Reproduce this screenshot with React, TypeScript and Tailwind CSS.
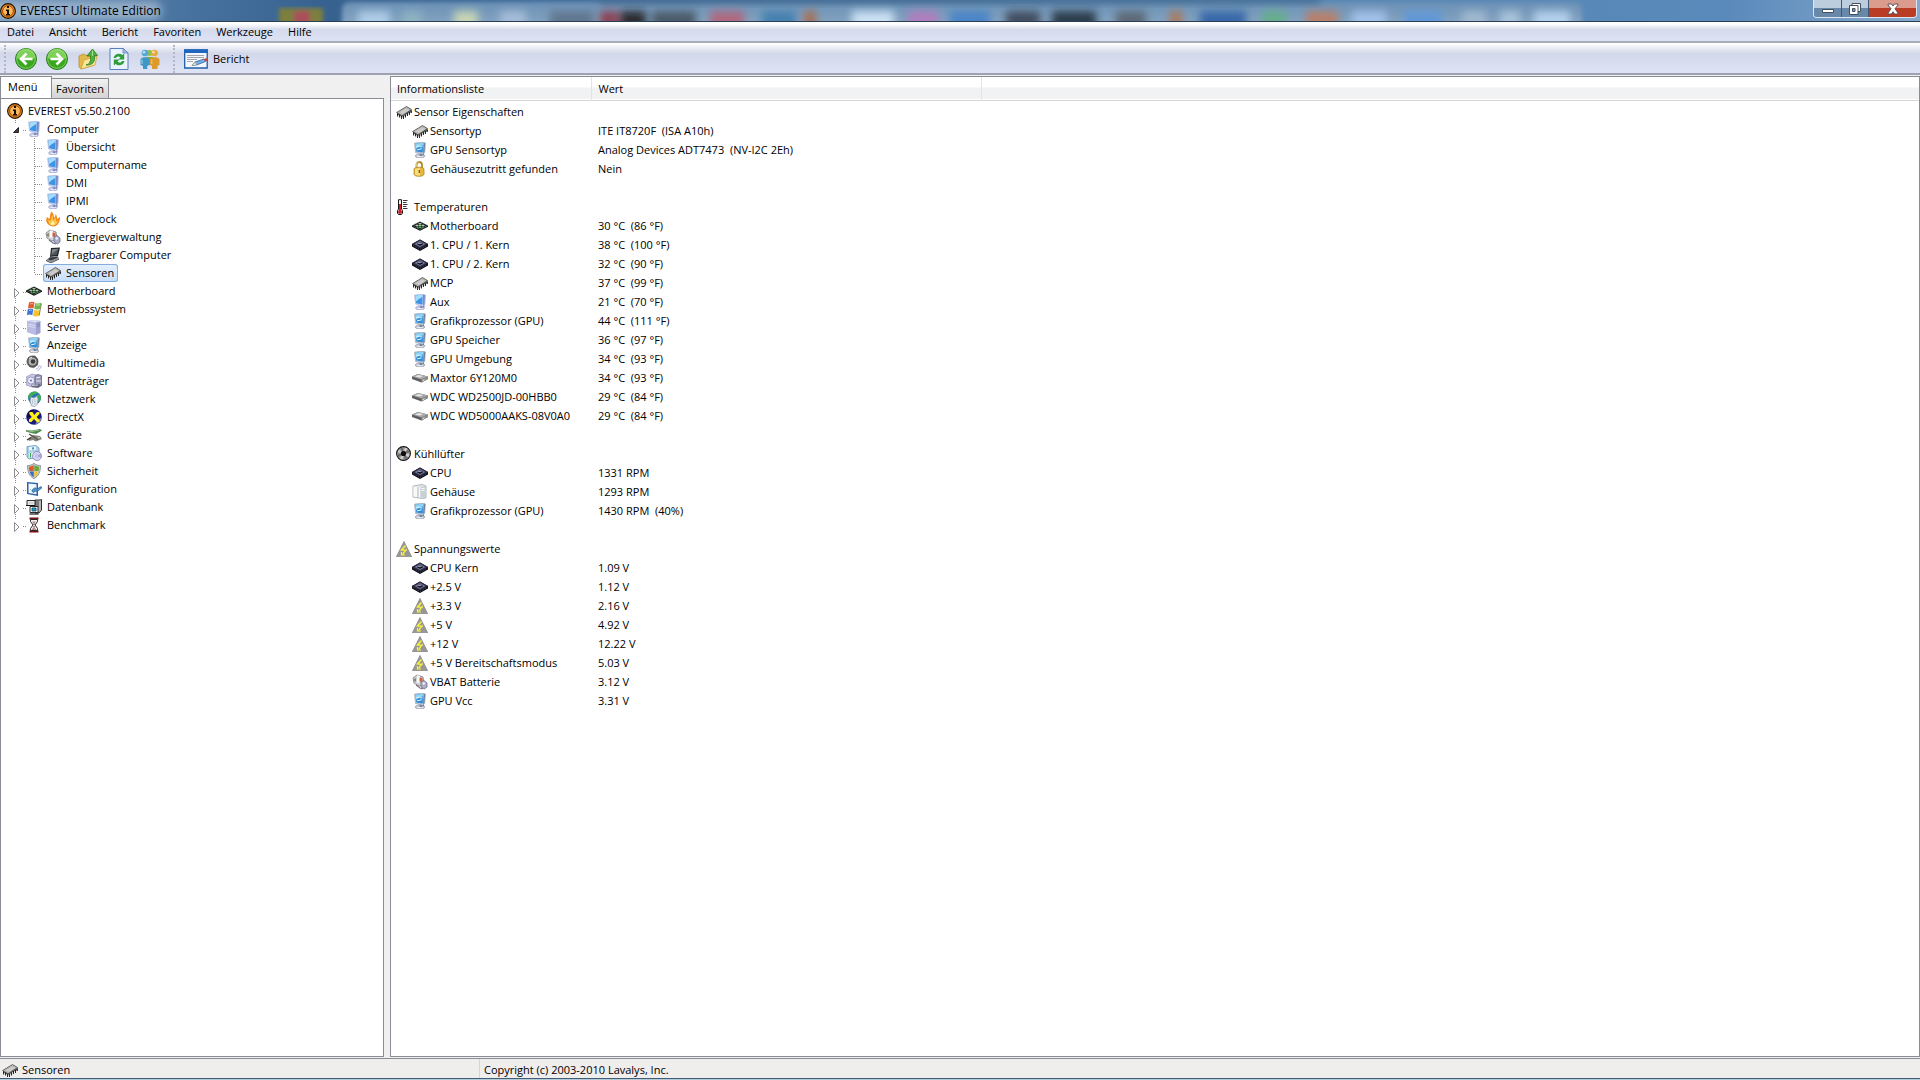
import clsx from 'clsx';
import { useState, type ReactNode } from 'react';

const MENUS = ['Datei', 'Ansicht', 'Bericht', 'Favoriten', 'Werkzeuge', 'Hilfe'];

const COMPUTER_CHILDREN = [
  { label: 'Übersicht', icon: 'monitor' },
  { label: 'Computername', icon: 'monitor' },
  { label: 'DMI', icon: 'monitor' },
  { label: 'IPMI', icon: 'monitor' },
  { label: 'Overclock', icon: 'flame' },
  { label: 'Energieverwaltung', icon: 'battery' },
  { label: 'Tragbarer Computer', icon: 'laptop' },
  { label: 'Sensoren', icon: 'chip' },
];

const CATEGORIES = [
  { label: 'Motherboard', icon: 'board' },
  { label: 'Betriebssystem', icon: 'windows' },
  { label: 'Server', icon: 'server' },
  { label: 'Anzeige', icon: 'display' },
  { label: 'Multimedia', icon: 'speaker' },
  { label: 'Datenträger', icon: 'storage' },
  { label: 'Netzwerk', icon: 'globe' },
  { label: 'DirectX', icon: 'directx' },
  { label: 'Geräte', icon: 'devices' },
  { label: 'Software', icon: 'software' },
  { label: 'Sicherheit', icon: 'shield' },
  { label: 'Konfiguration', icon: 'config' },
  { label: 'Datenbank', icon: 'database' },
  { label: 'Benchmark', icon: 'hourglass' },
];

const GROUPS = [
  {
    title: 'Sensor Eigenschaften',
    icon: 'chip',
    rows: [
      ['chip', 'Sensortyp', 'ITE IT8720F  (ISA A10h)'],
      ['display', 'GPU Sensortyp', 'Analog Devices ADT7473  (NV-I2C 2Eh)'],
      ['lock', 'Gehäusezutritt gefunden', 'Nein'],
    ],
  },
  {
    title: 'Temperaturen',
    icon: 'thermometer',
    rows: [
      ['board', 'Motherboard', '30 °C  (86 °F)'],
      ['cpu', '1. CPU / 1. Kern', '38 °C  (100 °F)'],
      ['cpu', '1. CPU / 2. Kern', '32 °C  (90 °F)'],
      ['chip', 'MCP', '37 °C  (99 °F)'],
      ['monitor', 'Aux', '21 °C  (70 °F)'],
      ['display', 'Grafikprozessor (GPU)', '44 °C  (111 °F)'],
      ['display', 'GPU Speicher', '36 °C  (97 °F)'],
      ['display', 'GPU Umgebung', '34 °C  (93 °F)'],
      ['hdd', 'Maxtor 6Y120M0', '34 °C  (93 °F)'],
      ['hdd', 'WDC WD2500JD-00HBB0', '29 °C  (84 °F)'],
      ['hdd', 'WDC WD5000AAKS-08V0A0', '29 °C  (84 °F)'],
    ],
  },
  {
    title: 'Kühllüfter',
    icon: 'fan',
    rows: [
      ['cpu', 'CPU', '1331 RPM'],
      ['case', 'Gehäuse', '1293 RPM'],
      ['display', 'Grafikprozessor (GPU)', '1430 RPM  (40%)'],
    ],
  },
  {
    title: 'Spannungswerte',
    icon: 'voltage',
    rows: [
      ['cpu', 'CPU Kern', '1.09 V'],
      ['cpu', '+2.5 V', '1.12 V'],
      ['voltage', '+3.3 V', '2.16 V'],
      ['voltage', '+5 V', '4.92 V'],
      ['voltage', '+12 V', '12.22 V'],
      ['voltage', '+5 V Bereitschaftsmodus', '5.03 V'],
      ['battery', 'VBAT Batterie', '3.12 V'],
      ['display', 'GPU Vcc', '3.31 V'],
    ],
  },
];

const ICONS: Record<string, ReactNode> = {
  info: (
    <>
      <circle cx="8" cy="8" r="7.4" fill="#ef8a1c" stroke="#1a1208" strokeWidth="1.1" />
      <circle cx="8" cy="8" r="5.4" fill="#f9b65a" stroke="#a34a06" strokeWidth="1" />
      <path d="M7 3h2v2H7zM6 6.5h3V11h1v1.5H6V11h1V8H6z" fill="#150c04" />
    </>
  ),
  monitor: (
    <>
      <ellipse cx="8" cy="14" rx="4.500" ry="2" fill="#c3c7e6" stroke="#9297c4" strokeWidth=".5" />
      <path d="M8 10l4-1.500.5 4.500-4 1.500z" fill="#6f78b8" />
      <path d="M2.500 1L11 0l2.500 1-.5 9.500-2.500 2L3.500 10z" fill="#c6cef0" stroke="#a3abd8" strokeWidth=".5" />
      <path d="M3.300 1.600L10.500.8v9.700L4.200 9.200z" fill="#3a95e4" />
      <path d="M3.300 1.600L10.500.8V3C8 4 6 6 4 7.500z" fill="#a3dcfc" />
      <path d="M11 .7l2 .6-.5 9-1.500 1.200z" fill="#7e89cb" />
      <path d="M5.500 14.200c2 .8 4 .6 5.500-.2" stroke="#f7f8fd" strokeWidth=".9" fill="none" />
    </>
  ),
  display: (
    <>
      <ellipse cx="8" cy="14" rx="5" ry="1.900" fill="#c3c6d2" stroke="#8f939f" strokeWidth=".5" />
      <path d="M7.500 10l4-1 .5 4-4 1.500z" fill="#707a92" />
      <path d="M2.500 1L12 0l1.500 1-.7 9.500-2.300 2L3.500 10.500z" fill="#bcc8d6" stroke="#8593a5" strokeWidth=".5" />
      <path d="M3.300 1.700l7.900-.9-.5 9.700-6.300-1z" fill="#2b8cd8" />
      <path d="M3.300 1.700l7.900-.9-.1 2.500C8.500 4 6 5.500 4 7z" fill="#8fd4f5" />
      <path d="M4.500 4.500l3-.5 1 1 2-.2M5.200 7.800l4.500-1" stroke="#e8f9ff" strokeWidth="1" fill="none" />
      <path d="M11.800 1l1.200.5-.7 8.500-1.200 1z" fill="#67748c" />
      <path d="M5 14.200c2 .8 4 .6 6-.2" stroke="#f7f8fa" strokeWidth=".9" fill="none" />
    </>
  ),
  flame: (
    <>
      <path d="M4 14C.5 11.500 1 8 2 6l2.500 2C5 5 5 3 6.500.5 9 3 9 5 9 7c1-1 1.500-2 1.500-4C12 5 12 6 12 8l3-2c0 4-1 7-4 9-2 .8-5 .5-7-1z" fill="#f08a1a" />
      <path d="M5 13.500c-2-2-2-3.500-1.500-5l2 1.500c1-2 1-4 1.500-6.500 1.200 2 1 4.500 1 6l3-3c0 2 .2 3 0 4l2-1c-.5 2.500-1.500 4-3.500 4.800-1.500.4-3 .2-4.500-.8z" fill="#fcc64a" />
      <path d="M6 14c-1-2 1-3 2-4 1 1 2 2 1.500 4z" fill="#fff1a8" />
    </>
  ),
  battery: (
    <>
      <path d="M1 4l4-3 6 2 1 7-5 2-5-3z" fill="#d5d5d8" stroke="#7c7777" strokeWidth=".8" />
      <path d="M5 1l3 1v6l-3 1z" fill="#f8f8f8" />
      <path d="M7.500 3.500l3 .5v4l-3-.5z" fill="#cf6238" />
      <path d="M2 5l2-1v4l-2-1z" fill="#8f8577" />
      <path d="M9 8l3-1.500 3 2.500v4l-2.500 2L9 13z" fill="#aaaec8" stroke="#6b6d85" strokeWidth=".8" />
      <path d="M10 9l2-1 1.500 1.500-2 1.500z" fill="#eceefa" />
      <path d="M4 11l4 3 3 1" stroke="#777282" strokeWidth="1.200" fill="none" />
    </>
  ),
  laptop: (
    <>
      <path d="M6 1l9-.5-2 8.500-8 1z" fill="#222426" />
      <path d="M7 2.200l6.500-.4-1.600 6-6 .9z" fill="#4d545c" />
      <path d="M7 2.200l6.500-.4L7 7z" fill="#7d868f" />
      <path d="M5 10l8-1 1 2.500-8 4L1 13z" fill="#8d9198" />
      <path d="M5 10.600l7-.8.500 1-6.500 2.500-3-1z" fill="#33363b" />
      <path d="M1 13l5 2.500 8-4v1L6 16.300 1 14z" fill="#3d4045" />
    </>
  ),
  chip: (
    <>
      <path d="M1 8.500L10.500 2.500 15.500 5.500V8L6.500 14 1 10.500z" fill="#5a5a5a" />
      <path d="M.5 8.500L10.500 2.500 15.500 5.500 6 11.800z" fill="#b4b4b1" stroke="#3e3e3e" strokeWidth=".6" />
      <path d="M3.500 8.500l6.500-4.300 3.500 1.700-6.500 4z" fill="#cbcbc8" />
      <path d="M1.500 9.500v3M3.500 10.500v3M5.500 12v3M7.500 12v3M9.500 10.500v3M11.500 9v3M13.500 8v3M15.400 6.500V9" stroke="#161616" strokeWidth=".9" />
      <path d="M2.500 11v2M4.500 12v2M6.500 12.500v2M8.500 11.500v2M10.500 10v2M12.500 9v2" stroke="#e4e4e4" strokeWidth=".8" />
    </>
  ),
  board: (
    <>
      <path d="M0 7.500l8-4 8 4-8 4z" fill="#16291b" />
      <path d="M0 7.500l8 4 8-4v1.200l-8 4-8-4z" fill="#070b08" />
      <path d="M3 7.500l2-1 2 1-2 1zM9 7.500l2-1 2 1-2 1zM6 5.800l2-1 2 1-2 1z" fill="#b9c4b9" />
      <path d="M6 9.300l2-1 2 1-2 1z" fill="#53b85f" />
      <path d="M7 7.500h2M5 9.200h1M10.500 9.200h1" stroke="#8be08e" strokeWidth=".9" />
      <path d="M2 6.500l5-2.500M14 8.500l-5 2.500" stroke="#8a958b" strokeWidth=".6" strokeDasharray="1 1" />
    </>
  ),
  cpu: (
    <>
      <path d="M0 7l8-4.500L16 7v2.500L8 14 0 9.500z" fill="#090a12" />
      <path d="M0 7l8-4.500L16 7l-8 4.500z" fill="#30324c" />
      <path d="M3.500 7L8 4.500 12.500 7 8 9.500z" fill="#161722" stroke="#8183a5" strokeWidth=".9" />
      <path d="M5.500 6.500h4M8 5v2" stroke="#a9abc9" strokeWidth=".8" />
      <path d="M1 8.500l7 4 7-4" stroke="#5e607e" strokeWidth=".8" strokeDasharray="1 1" fill="none" />
    </>
  ),
  windows: (
    <>
      <path d="M3 1.500c2-1 4-1 5.500 0l-1 6c-2-1-3.500-1-5.500 0z" fill="#e5562a" />
      <path d="M9.200 2c2 .8 4 .8 6-.2l-1 6c-2 1-4 1-6 0z" fill="#6fb845" />
      <path d="M1.800 8.300c2-1 3.800-1 5.500 0l-1 6c-1.800-1-3.500-1-5.500 0z" fill="#3f74d8" />
      <path d="M8 8.800c2 1 4 1 6 0l-1 5.900c-2 1-4 1-6 0z" fill="#f6c52d" />
      <path d="M4 3c1.500-.5 2.500-.5 3.500 0M10 3.800c1.500.5 2.500.4 4 0M3 9.500c1.200-.5 2-.5 3 0" stroke="#fff" strokeOpacity=".55" fill="none" />
      <path d="M15.400 2.500l-2.200 12" stroke="#5a563e" strokeWidth=".7" />
    </>
  ),
  server: (
    <>
      <path d="M1 2l8-1 5.500 1v12L10 16l-9-3z" fill="#9ea1cf" />
      <path d="M1 2l9 1.500V16l-9-3z" fill="#b9bbe2" />
      <path d="M1 2l8-1 5.500 1-4.500 1.500z" fill="#dfe0f5" />
      <path d="M2 5l7 1.500M2 7l7 1.500" stroke="#e6e7f8" strokeWidth=".7" />
      <path d="M11 5.500l3-.8M11 7.500l3-.8" stroke="#7477a9" strokeWidth=".8" />
    </>
  ),
  speaker: (
    <>
      <path d="M2 2l7-1.500 3 4V10l-4 3-5-1z" fill="#878787" />
      <circle cx="6.500" cy="6.500" r="5.500" fill="#6a6a6a" stroke="#3c3c3c" strokeWidth=".8" />
      <circle cx="6.500" cy="6.500" r="3.800" fill="#b4b4b4" />
      <circle cx="7" cy="6.500" r="2.300" fill="#3a3a3a" />
      <path d="M3 3.500l3-1.300" stroke="#ededed" />
      <path d="M10 14c2-.5 3-2 3.300-4M11.500 15.500c2-1 3.500-2.500 3.800-5" stroke="#a6a9e0" fill="none" />
    </>
  ),
  storage: (
    <>
      <path d="M0 4l6-3 5 1v9l-5 3-6-2z" fill="#c7c9e6" stroke="#8587ae" strokeWidth=".6" />
      <circle cx="5" cy="7.500" r="3.600" fill="#e9e9f8" stroke="#8a8cba" strokeWidth=".8" />
      <circle cx="5" cy="7.500" r="1.100" fill="#7576aa" />
      <path d="M9 3l3-1.500 3.500 1V12l-4 1.500-2.500-1z" fill="#9899b7" stroke="#55567a" strokeWidth=".7" />
      <path d="M10 5l4-.8M10 8h5" stroke="#eeeefa" />
      <path d="M5 12l8-1 3 1.500-4 2.500-6-.8z" fill="#686985" />
      <path d="M6 12.500l6-.5" stroke="#e1e1ee" strokeWidth=".8" />
    </>
  ),
  globe: (
    <>
      <circle cx="8.500" cy="7" r="6.500" fill="#2a72b8" />
      <path d="M3 3.500C5 .5 9 0 11 1c1 1-1 2-3 2.500S5 6 3 8c-1-1-.8-3 0-4.500zM11 4l3-.5c1.500 3 1 6-1 8l-1.500-3z" fill="#3fae55" />
      <path d="M5 6l3 1 3-2 1 3-.5 5L9 15.500 5.500 15 4 10z" fill="#e6eaf0" stroke="#8593a8" strokeWidth=".7" />
      <path d="M6.500 8v5M9 8v6" stroke="#a9b4c5" strokeWidth=".7" />
    </>
  ),
  directx: (
    <>
      <circle cx="8" cy="8" r="7.800" fill="#1b1c79" />
      <path d="M1 8a7 7 0 0 1 7-7.500L6 4 3 9z" fill="#10103e" />
      <path d="M9 15.500c3-.5 6-3 6.500-7L12 11z" fill="#8489cf" />
      <path d="M3.500 3h3L8.300 6 11 3h2.500v2L10.500 8l3 3v2.200H11L8 10l-2.500 3H3v-2.500L5.800 8 3.300 5z" fill="#fdf01a" />
    </>
  ),
  devices: (
    <>
      <path d="M0 3l6 .5 8-1.500 2 1.500-6 3.500-5-1-5-1.500z" fill="#4d8b4c" />
      <path d="M1 3.500l5 1 7-1.500" stroke="#a9cda1" strokeWidth=".8" fill="none" />
      <path d="M2 12l5-4 7 1 2 3-6 2.500-3-1.500L3 14z" fill="#84837c" />
      <path d="M6 9l4 2.500 4-1" stroke="#d8d6c9" fill="none" />
      <path d="M3 7l9 5.500" stroke="#4b4a44" strokeWidth="1.400" />
      <path d="M1 13l4-2.500" stroke="#35342f" strokeWidth="1.200" />
    </>
  ),
  software: (
    <>
      <path d="M1 1.500L10 .5l3 2.500v9L3 14l-2-2z" fill="#a9cfe9" stroke="#6496ba" strokeWidth=".8" />
      <path d="M3 2l7-.7v3.500L3 5.500z" fill="#eaf5fc" />
      <path d="M6 2.500l2-.2v2l-2 .2z" fill="#5d8cad" />
      <path d="M3 8l4-.5v5L3 13z" fill="#f1f7fb" />
      <path d="M4.500 8v4.500" stroke="#3ba74c" strokeWidth="1.300" />
      <circle cx="11" cy="11" r="4.500" fill="#d7d6f2" stroke="#8481b8" strokeWidth=".8" />
      <path d="M11 11l3.500-2.500A4.500 4.500 0 0 1 15 13z" fill="#a7a4e2" />
      <circle cx="11" cy="11" r="1.300" fill="#fff" stroke="#8481b8" strokeWidth=".6" />
    </>
  ),
  shield: (
    <>
      <path d="M8 .3c2 1.700 4.500 2.200 6.500 2.200 0 6-1.500 10.500-6.500 13.200C3 13 1.500 8.500 1.500 2.500 4 2.500 6 2 8 .3z" fill="#c9ccd0" stroke="#71757d" strokeWidth=".7" />
      <path d="M7.700 2C6.300 3 4.500 3.600 2.900 3.700c0 1.500.2 3 .5 4.200h4.300z" fill="#e1582b" />
      <path d="M8.300 2c1.400 1 3.200 1.600 4.800 1.700 0 1.500-.2 3-.5 4.200H8.300z" fill="#67a93c" />
      <path d="M7.700 8.400H3.600C4.300 11 5.700 13 7.700 14.200z" fill="#2f6fc9" />
      <path d="M8.300 8.400h4.100C11.700 11 10.300 13 8.300 14.200z" fill="#f5c528" />
    </>
  ),
  config: (
    <>
      <path d="M1 1l11 1v13L1 13z" fill="#2a63a8" />
      <path d="M2.500 2.500l8 .8v10l-8-1.400z" fill="#f4f8fc" />
      <path d="M4 8l2.500 3L10 5.500" stroke="#b6c7d8" fill="none" />
      <path d="M6 9l2.500-2L11 8l4-2.500.8 1.500-4 3-2.300.3L7 11.500z" fill="#4d96d2" stroke="#1d4f85" strokeWidth=".6" />
    </>
  ),
  database: (
    <>
      <path d="M9 1h5l1.500-.5V11L13 14H9z" fill="#b9b9b9" stroke="#161616" strokeWidth=".9" />
      <path d="M10 3h3M10 5h3M10 7h3" stroke="#222" strokeWidth=".8" />
      <path d="M1 1.500h8v5H1z" fill="#e8e8e8" stroke="#161616" strokeWidth=".9" />
      <path d="M0 6.500h9" stroke="#111" />
      <path d="M2.500 3h5v2h-5z" fill="#cfd8df" />
      <path d="M4 7.500h8v6H4z" fill="#f5f5f5" stroke="#161616" strokeWidth=".9" />
      <path d="M6 9h4v3H6z" fill="#17a3d3" stroke="#063c55" strokeWidth=".7" />
      <path d="M3.500 15h9" stroke="#161616" strokeWidth="1.200" />
    </>
  ),
  hourglass: (
    <>
      <path d="M3.500 1.500h9M3.500 14.500h9" stroke="#7b1113" strokeWidth="1.800" />
      <path d="M4.500 2.500h7v2L9 8l2.500 3.500v2h-7v-2L7 8 4.500 4.500z" fill="#f2f2f2" stroke="#161616" strokeWidth=".9" />
      <path d="M6 4.500h4L8 7.500zM8 9.500l2.500 3.500h-5z" fill="#b48d8b" />
      <path d="M8 7v4" stroke="#4b1111" strokeWidth=".8" strokeDasharray="1 1" />
    </>
  ),
  lock: (
    <>
      <path d="M4.500 7V4c0-4 5.500-4 5.500 0v3" stroke="#b08a26" strokeWidth="1.800" fill="none" />
      <path d="M4.300 7V4c0-3 2-3.300 3-3.300" stroke="#f1e0a0" strokeWidth=".8" fill="none" />
      <path d="M2 8c0-1 2-1.800 5-1.800s5 .8 5 1.800v5c0 1.500-2 2.300-5 2.300S2 14.500 2 13z" fill="#e6b93c" stroke="#a97c18" strokeWidth=".7" />
      <path d="M3 8c1-.8 3-1 5-.8v7.300c-2 0-4 0-5-1.200z" fill="#f8dd80" />
      <path d="M7.300 9v3" stroke="#7a5910" strokeWidth="1.300" />
    </>
  ),
  thermometer: (
    <>
      <path d="M2.500.7h3v9.300l1 1.500V14l-1 1.500h-3L1.500 14v-2.500l1-1.500z" fill="#f5f5f5" stroke="#161616" />
      <path d="M3 5h2v6l.8 1v1.700l-.8 1H3l-.8-1V12l.8-1z" fill="#d01c24" />
      <path d="M7 1.500h4.500M7 3.500h3.500M7 5.500h4.500M7 7.500h3.500M7 9.500h4.500" stroke="#222" strokeWidth=".9" />
    </>
  ),
  hdd: (
    <>
      <path d="M0 6.500l6-2.500 10 2.500V9l-6.500 3.500L0 9z" fill="#5f5f5f" />
      <path d="M0 6.500L6 4l10 2.500-6.500 3z" fill="#a9a9a9" />
      <path d="M3 6.400l3.500-1.400 4.500 1L8 7.500z" fill="#e8e8e8" />
      <path d="M9.500 9.500L16 6.500V9l-6.500 3.500z" fill="#8d8d8d" />
      <path d="M10.500 10.700l2-1" stroke="#eee" />
    </>
  ),
  fan: (
    <>
      <circle cx="7.500" cy="7.500" r="6.900" fill="#a5a5a5" stroke="#121212" strokeWidth="1.100" />
      <path d="M7.500 7.500L4 2.500 7 1.500zM7.500 7.500L12 3.500l1.500 3zM7.500 7.500l4.500 4.500-3.500 1.300zM7.500 7.500l-5 4-1-3.500z" fill="#6b6b6b" />
      <path d="M7.500 7.500l2-6 2 1.200zM7.500 7.500l6 1-1 2.500zM7.500 7.500l-1 6L4 12.500zM7.500 7.500L2 6l1-2z" fill="#d2d2d2" />
      <circle cx="7.500" cy="7.500" r="2.600" fill="#0d0d0d" />
    </>
  ),
  case: (
    <>
      <path d="M1 2l9-1.500L14 2v12l-4.500.5L1 13z" fill="#e2e6e8" stroke="#a2a9ad" strokeWidth=".8" />
      <path d="M1.500 2.500L8 3v10.500l-6.500-1z" fill="#f7f9fa" />
      <path d="M8.500 3L13 2.500v11H8.500z" fill="#c9d0d4" />
      <path d="M9.500 4.500h3M9.500 6.500h3" stroke="#f8fbfc" />
      <path d="M6 3v10.500" stroke="#8f989d" strokeWidth=".7" />
    </>
  ),
  voltage: (
    <>
      <path d="M8 0l1 1v1l1 1v1l1 1v1l1 1v1l1 1v1l1 1v1l1 1v1l1 1v1H0v-1l1-1v-1l1-1v-1l1-1V9l1-1V7l1-1V5l1-1V3l1-1V1z" fill="#979797" />
      <path d="M9.500 4.500L5.500 9l4 .3-2.800 4" stroke="#faf43a" strokeWidth="1.400" fill="none" />
      <path d="M5.500 11v3h3.500" stroke="#faf43a" strokeWidth="1.200" fill="none" />
      <path d="M10.500 7.500v2.500" stroke="#e6e070" strokeWidth=".8" />
    </>
  ),
};

const Icon = ({ name }: { name: string }) => (
  <svg viewBox="0 0 16 16" className="size-4 shrink-0" aria-hidden="true">
    {ICONS[name]}
  </svg>
);

const ArrowIcon = ({ back }: { back?: boolean }) => (
  <svg viewBox="0 0 22 22" className="size-[22px]" aria-hidden="true">
    <circle cx="11" cy="11" r="10.500" fill="#3aa81f" stroke="#2b7f1a" />
    <path d="M1.500 10a9.500 9.500 0 0 1 19 0c-5 2.500-13 2.500-19 0z" fill="#7ed058" />
    <circle cx="11" cy="11" r="9.300" fill="none" stroke="#a9e58d" strokeOpacity=".6" />
    <path
      d={back ? 'M17.500 11H6M11.500 5.500L6 11l5.500 5.500' : 'M4.500 11H16M10.500 5.500L16 11l-5.500 5.500'}
      stroke="#fff"
      strokeWidth="2.600"
      fill="none"
    />
  </svg>
);

const FolderUpIcon = () => (
  <svg viewBox="0 0 22 22" className="size-[22px]" aria-hidden="true">
    <path d="M2 8l5-2 2 1.500 7-1v11L4 21 2 19z" fill="#e4b84a" stroke="#b98b26" strokeWidth=".8" />
    <path d="M4 21L7 12l13-4-2 9z" fill="#fae697" stroke="#cfa23a" strokeWidth=".8" />
    <path d="M9 17c4-1 5-4 4.500-9H10l5.500-7 5 6.500h-3c1 6-2 10-8.500 9.500z" fill="#4db240" stroke="#2a7a22" strokeWidth=".8" />
    <path d="M15.500 2.500V8" stroke="#a5e08f" />
  </svg>
);

const RefreshIcon = () => (
  <svg viewBox="0 0 20 24" className="h-6 w-[22px]" aria-hidden="true">
    <path d="M1 1.500h13L19 6v16.500H1z" fill="#e9f2fd" stroke="#5b7fbd" />
    <path d="M14 1.500V6h5z" fill="#a9c3ea" stroke="#5b7fbd" strokeWidth=".8" />
    <path d="M4.500 11c1-4.500 6-5.500 9-3l1.700-1.500v6H9.500l2-2c-1.500-1.500-3.500-1.500-4.500.5z" fill="#2f9e3a" />
    <path d="M15.500 14c-1 4.500-6 5.500-9 3l-1.700 1.500v-6h5.700l-2 2c1.500 1.500 3.500 1.500 4.500-.5z" fill="#2f9e3a" />
  </svg>
);

const UsersIcon = () => (
  <svg viewBox="0 0 22 22" className="size-[22px]" aria-hidden="true">
    <circle cx="10.500" cy="5" r="3" fill="#93bd4c" />
    <path d="M7 9h7v8H7z" fill="#7fab3c" />
    <circle cx="6" cy="5" r="3.300" fill="#52a8d4" />
    <path d="M1.500 11c2-2.500 7-2.500 8.700 0v6l-2 1v3H4v-3l-2.500-1z" fill="#3f97c8" />
    <circle cx="5" cy="4.200" r="1.400" fill="#b4e0f3" />
    <path d="M3 11.500V16" stroke="#9dd3ec" />
    <circle cx="15.500" cy="5" r="3.300" fill="#e8a93b" />
    <path d="M11 11c2-2.500 7.500-2.500 9.500 0v6l-2 1v3H13v-3l-2-1z" fill="#dd9a2c" />
    <circle cx="14.500" cy="4.200" r="1.400" fill="#f9dc9c" />
    <path d="M12.800 11.500V16" stroke="#f7cd7c" />
  </svg>
);

const ReportIcon = () => (
  <svg viewBox="0 0 24 20" className="h-5 w-6" aria-hidden="true">
    <path d="M.7 1h22.500v18H.7z" fill="#f4f7fb" stroke="#1f5ca8" strokeWidth="1.300" />
    <path d="M0 .4h24V4H0z" fill="#1e66c0" />
    <path d="M3 6.500h17M3 8.500h17M3 10.500h10M3 12.500h6" stroke="#8b9199" strokeWidth=".8" />
    <path d="M8 16.500l3-3.500 9-3 1.500 2.500-9 3.500z" fill="#77b0e6" stroke="#2d5f9b" strokeWidth=".8" />
    <path d="M8 16.500l3-3.500 1.500 3z" fill="#f0d69b" />
    <path d="M20 10l2.500-1 1 2.500-2 1z" fill="#d83a2c" />
  </svg>
);

// Blurred desktop dock seen through the glass title bar: [x, width, colour]
const DOCK_BLOBS: [number, number, string][] = [
  [358, 32, '#b6d4ee'], [402, 20, '#8fb6c2'], [454, 24, '#d4dfb4'], [500, 26, '#abc1dd'],
  [550, 44, '#5c6f86'], [600, 18, '#8f3140'], [620, 26, '#1e1519'], [652, 44, '#424f5c'],
  [710, 34, '#b85e73'], [762, 34, '#3b7cae'], [804, 12, '#b2653e'], [852, 42, '#d8ebfc'],
  [908, 30, '#b878bd'], [950, 40, '#3f81c9'], [1006, 34, '#39414f'], [1052, 44, '#1f2a38'],
  [1116, 30, '#57616a'], [1170, 12, '#b57246'], [1200, 46, '#2c5fa6'], [1262, 24, '#62b183'],
  [1306, 32, '#c17a5b'], [1352, 34, '#a8c6ef'], [1404, 38, '#5c97dc'], [1462, 24, '#a6bdd3'],
  [1500, 20, '#b0c9e0'], [1534, 36, '#bcd9f4'],
];

const GlassBackdrop = () => (
  <svg
    viewBox="0 0 1920 21"
    preserveAspectRatio="none"
    className="absolute inset-0 size-full"
    aria-hidden="true"
  >
    <defs>
      <linearGradient id="glass">
        <stop offset="0" stopColor="#6d8fb3" />
        <stop offset=".1" stopColor="#47729f" />
        <stop offset=".17" stopColor="#37628f" />
        <stop offset=".68" stopColor="#5585b3" />
        <stop offset=".9" stopColor="#5a8abb" />
        <stop offset="1" stopColor="#86a9cb" />
      </linearGradient>
      <linearGradient id="dock" x2="0" y2="1">
        <stop offset="0" stopColor="#6a90b5" />
        <stop offset="1" stopColor="#8fabc5" />
      </linearGradient>
      <filter id="soft" x="-20%" y="-50%" width="140%" height="200%">
        <feGaussianBlur stdDeviation="4" />
      </filter>
      <filter id="edge">
        <feGaussianBlur stdDeviation="2" />
      </filter>
    </defs>
    <rect width="1920" height="21" fill="url(#glass)" />
    <rect x="342" y="2" width="1240" height="30" rx="8" fill="url(#dock)" filter="url(#edge)" />
    <rect x="600" y="-6" width="720" height="9" fill="#466c93" filter="url(#soft)" />
    <g filter="url(#edge)">
      <rect x="279" y="8" width="44" height="18" fill="#7d7f3e" />
      <rect x="294" y="11" width="16" height="14" fill="#a8505a" />
    </g>
    <g filter="url(#soft)" opacity=".85">
      {DOCK_BLOBS.map(([x, width, fill]) => (
        <rect key={x} x={x} y="11" width={width} height="18" fill={fill} />
      ))}
    </g>
    <rect x="-10" y="1" width="172" height="19" rx="9" fill="#b7c9dc" fillOpacity=".65" filter="url(#soft)" />
  </svg>
);

const TitleBar = () => (
  <header className="relative flex h-[22px] shrink-0 items-start justify-between overflow-hidden border-b border-[#2c3e54]">
    <GlassBackdrop />
    <h1 className="relative flex h-[22px] items-center gap-1 text-[12px]">
      <Icon name="info" />
      EVEREST Ultimate Edition
    </h1>
    <div className="relative mr-[3px] flex h-[18px] overflow-hidden rounded-b-[4px] border border-t-0 border-[#dbe6f1]">
      <button
        type="button"
        aria-label="Minimieren"
        className="flex w-7 items-center justify-center border-r border-[#3f5870] bg-linear-to-b from-[#bccddd] from-45% to-[#6788a8] to-50%"
      >
        <svg viewBox="0 0 12 12" className="size-3">
          <path d="M.5 6.500h11v3H.5z" fill="#fff" stroke="#44505e" />
        </svg>
      </button>
      <button
        type="button"
        aria-label="Verkleinern"
        className="flex w-[27px] items-center justify-center border-r border-[#3f5870] bg-linear-to-b from-[#bccddd] from-45% to-[#6788a8] to-50%"
      >
        <svg viewBox="0 0 12 12" className="size-3">
          <path d="M3 .5h8.500v8H3z" fill="#fff" stroke="#44505e" />
          <path d="M.5 2.500h8.500v9H.5z" fill="#fff" stroke="#44505e" />
          <path d="M3.500 5.500h2.500v3H3.500z" fill="#7f9ab5" stroke="#44505e" />
        </svg>
      </button>
      <button
        type="button"
        aria-label="Schließen"
        className="flex w-[47px] items-center justify-center bg-linear-to-b from-[#dc9c8d] from-45% to-[#bb3c25] to-50%"
      >
        <svg viewBox="0 0 12 12" className="size-3">
          <path
            d="M1 1h3.500L6 3l1.500-2H11v1L8 5.800 11 10v1H7.500L6 8.800 4.500 11H1v-1l3-4.200L1 2z"
            fill="#fff"
            stroke="#53464c"
            strokeWidth=".9"
          />
        </svg>
      </button>
    </div>
  </header>
);

const Grip = () => <span className="h-7 border-l-2 border-dotted border-[#b4b7c4]" />;

const Toolbar = () => (
  <div className="flex h-8 shrink-0 items-center border-b-2 border-[#9da1b0] bg-linear-to-b from-white via-[#d2d8ea] via-35% to-[#dee3f6] pt-px pl-1">
    <Grip />
    <div className="ml-[9px] flex items-center gap-[9px]">
      <button type="button" aria-label="Zurück">
        <ArrowIcon back />
      </button>
      <button type="button" aria-label="Vorwärts">
        <ArrowIcon />
      </button>
      <button type="button" aria-label="Aufwärts">
        <FolderUpIcon />
      </button>
      <button type="button" aria-label="Aktualisieren">
        <RefreshIcon />
      </button>
      <button type="button" aria-label="Benutzer">
        <UsersIcon />
      </button>
    </div>
    <span className="w-3" />
    <Grip />
    <button type="button" className="ml-[9px] flex items-center gap-[5px]">
      <ReportIcon />
      Bericht
    </button>
  </div>
);

// Dotted connector lines and the expander triangle left of a tree row
const Branch = ({ child, open, last }: { child?: boolean; open?: boolean; last?: boolean }) => (
  <svg
    viewBox={child ? '0 0 42 18' : '0 0 25 18'}
    className={clsx('h-[18px] shrink-0', child ? 'w-[42px]' : 'w-[25px]')}
    aria-hidden="true"
  >
    <g stroke="#8a8a8a" strokeDasharray="1 1" fill="none">
      {child ? (
        <>
          <path d="M14.500 0v18" />
          <path d={last ? 'M33.500 0v10' : 'M33.500 0v18'} />
          <path d="M34 10.500h8" />
        </>
      ) : (
        <>
          <path d={last ? 'M14.500 0v4' : 'M14.500 0v4M14.500 16v2'} />
          <path d="M22 10.500h3" />
        </>
      )}
    </g>
    {!child &&
      (open ? (
        <path d="M17.500 7.500v5h-5z" fill="#404040" stroke="#262626" />
      ) : (
        <path d="M13.500 6.500l4.500 4.500-4.500 4.500z" fill="#fff" stroke="#8e8e8e" />
      ))}
  </svg>
);

interface TreeItemProps {
  label: string;
  icon: string;
  child?: boolean;
  open?: boolean;
  last?: boolean;
  selected?: boolean;
  onSelect: (label: string) => void;
}

const TreeItem = ({ label, icon, child, open, last, selected, onSelect }: TreeItemProps) => (
  <div className="flex h-[18px] items-center">
    <Branch child={child} open={open} last={last} />
    <button
      type="button"
      onClick={() => onSelect(label)}
      className={clsx(
        'flex h-[18px] items-center gap-[5px] rounded-[3px] pr-1',
        child && 'pl-[2px]',
        selected && 'bg-linear-to-b from-[#e6f0fc] to-[#c4dcfb] ring-1 ring-[#84acdd] ring-inset',
      )}
    >
      <Icon name={icon} />
      {label}
    </button>
  </div>
);

const Sidebar = () => {
  const [selected, setSelected] = useState('Sensoren');

  return (
    <aside className="flex w-96 shrink-0 flex-col">
      <div className="flex items-end" role="tablist">
        <button
          type="button"
          role="tab"
          aria-selected="true"
          className="-mb-px flex h-[23px] w-[52px] items-center border border-b-0 border-[#898c95] bg-white pb-[2px] pl-[7px]"
        >
          Menü
        </button>
        <button
          type="button"
          role="tab"
          aria-selected="false"
          className="flex h-5 w-[57px] items-center border border-b-0 border-l-0 border-[#898c95] bg-linear-to-b from-[#f2f2f2] to-[#d4d4d4] pl-1"
        >
          Favoriten
        </button>
      </div>
      <nav className="flex-1 border border-[#898c95] bg-white pt-[3px]">
        <div className="flex h-[18px] items-center gap-[5px] pl-[6px]">
          <Icon name="info" />
          EVEREST v5.50.2100
        </div>
        <TreeItem label="Computer" icon="monitor" open onSelect={setSelected} />
        {COMPUTER_CHILDREN.map((item, i) => (
          <TreeItem
            key={item.label}
            {...item}
            child
            last={i === COMPUTER_CHILDREN.length - 1}
            selected={selected === item.label}
            onSelect={setSelected}
          />
        ))}
        {CATEGORIES.map((item, i) => (
          <TreeItem
            key={item.label}
            {...item}
            last={i === CATEGORIES.length - 1}
            selected={selected === item.label}
            onSelect={setSelected}
          />
        ))}
      </nav>
    </aside>
  );
};

const SensorTable = () => (
  <main className="flex-1 border border-[#898c95] bg-white">
    <table className="w-full table-fixed border-collapse text-left">
      <colgroup>
        <col className="w-[200px]" />
        <col className="w-[390px]" />
        <col />
      </colgroup>
      <thead>
        <tr className="h-[23px] border-b border-[#d5d5d5] bg-linear-to-b from-white from-45% to-[#f1f2f4] to-50%">
          <th className="border-r border-[#e0e3e8] pt-[2px] pl-[6px] font-normal">Informationsliste</th>
          <th className="border-r border-[#e0e3e8] pt-[2px] pl-[7px] font-normal">Wert</th>
          <td />
        </tr>
      </thead>
      {GROUPS.map((group, i) => (
        <tbody key={group.title}>
          <tr className={i === 0 ? 'h-[21px]' : 'h-[38px]'}>
            <th colSpan={3} className="pl-[5px] align-bottom font-normal">
              <span className="flex h-[19px] items-center gap-[2px]">
                <Icon name={group.icon} />
                {group.title}
              </span>
            </th>
          </tr>
          {group.rows.map(([icon, name, value]) => (
            <tr key={name} className="h-[19px]">
              <td className="pl-[21px]">
                <span className="flex h-[19px] items-center gap-[2px] whitespace-nowrap">
                  <Icon name={icon} />
                  {name}
                </span>
              </td>
              <td className="pl-[7px] whitespace-pre">{value}</td>
              <td />
            </tr>
          ))}
        </tbody>
      ))}
    </table>
  </main>
);

const App = () => (
  <div className="flex h-screen flex-col overflow-hidden bg-[#f0f0f0] font-['Open_Sans','Noto_Sans',sans-serif] text-[11px] leading-4 text-black">
    <TitleBar />
    <nav className="flex h-[21px] shrink-0 items-center gap-[15px] border-b-2 border-[#a9adbb] bg-linear-to-b from-white from-10% via-[#d6dbec] via-40% to-[#dde2f4] pl-[7px]">
      {MENUS.map((menu) => (
        <button key={menu} type="button">
          {menu}
        </button>
      ))}
    </nav>
    <Toolbar />
    <div className="mt-px flex flex-1 gap-[6px]">
      <Sidebar />
      <SensorTable />
    </div>
    <footer className="mt-px flex h-5 shrink-0 items-center border-t border-[#898c95] bg-[#f0eded]">
      <div className="flex w-[480px] items-center gap-1 border-r border-[#d7d3d3] pt-[3px] pl-[2px]">
        <Icon name="chip" />
        Sensoren
      </div>
      <p className="pt-[3px] pl-1">Copyright (c) 2003-2010 Lavalys, Inc.</p>
    </footer>
    <div className="h-[2px] shrink-0 border-t border-[#3f5f78] bg-[#b3cbd9]" />
  </div>
);

export default App;
